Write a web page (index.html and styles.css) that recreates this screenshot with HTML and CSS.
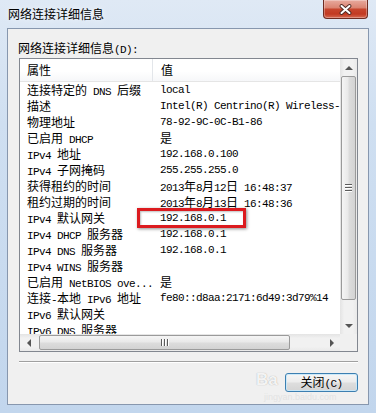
FILE: index.html
```html
<!DOCTYPE html>
<html lang="zh-CN">
<head>
    <meta charset="UTF-8">
    <meta name="viewport" content="width=device-width, initial-scale=1.0">
    <title>网络连接详细信息</title>
    <link rel="stylesheet" href="styles.css">
</head>
<body>
<div class="window">
    <div class="titlebar">
        <span class="title">网络连接详细信息</span>
        <div class="close">
            <svg width="13" height="11" viewBox="0 0 13 11">
                <path d="M2.5 2 L10.5 9 M10.5 2 L2.5 9" stroke="#4f2a24" stroke-width="3.8" stroke-linecap="round"/>
                <path d="M2.5 2 L10.5 9 M10.5 2 L2.5 9" stroke="#fff" stroke-width="2" stroke-linecap="round"/>
            </svg>
        </div>
    </div>

    <div class="client">
        <div class="label">网络连接详细信息<span class="en">(D):</span></div>

        <div class="listbox">
            <div class="viewport">
                <div class="header">
                    <div class="hcol name">属性</div>
                    <div class="hcol value">值</div>
                </div>
                <div class="rows">
                    <div class="row"><div class="cell name"><span class="zh">连接特定的</span> DNS <span class="zh">后缀</span></div><div class="cell value">local</div></div>
                    <div class="row"><div class="cell name"><span class="zh">描述</span></div><div class="cell value">Intel(R) Centrino(R) Wireless-N 1030</div></div>
                    <div class="row"><div class="cell name"><span class="zh">物理地址</span></div><div class="cell value">78-92-9C-0C-B1-86</div></div>
                    <div class="row"><div class="cell name"><span class="zh">已启用</span> DHCP</div><div class="cell value"><span class="zh">是</span></div></div>
                    <div class="row"><div class="cell name">IPv4 <span class="zh">地址</span></div><div class="cell value">192.168.0.100</div></div>
                    <div class="row"><div class="cell name">IPv4 <span class="zh">子网掩码</span></div><div class="cell value">255.255.255.0</div></div>
                    <div class="row"><div class="cell name"><span class="zh">获得租约的时间</span></div><div class="cell value">2013<span class="zh">年</span>8<span class="zh">月</span>12<span class="zh">日</span> 16:48:37</div></div>
                    <div class="row"><div class="cell name"><span class="zh">租约过期的时间</span></div><div class="cell value">2013<span class="zh">年</span>8<span class="zh">月</span>13<span class="zh">日</span> 16:48:36</div></div>
                    <div class="row marked"><div class="cell name">IPv4 <span class="zh">默认网关</span></div><div class="cell value">192.168.0.1</div><div class="mark"></div></div>
                    <div class="row"><div class="cell name">IPv4 DHCP <span class="zh">服务器</span></div><div class="cell value">192.168.0.1</div></div>
                    <div class="row"><div class="cell name">IPv4 DNS <span class="zh">服务器</span></div><div class="cell value">192.168.0.1</div></div>
                    <div class="row"><div class="cell name">IPv4 WINS <span class="zh">服务器</span></div><div class="cell value"></div></div>
                    <div class="row"><div class="cell name"><span class="zh">已启用</span> NetBIOS ove...</div><div class="cell value"><span class="zh">是</span></div></div>
                    <div class="row"><div class="cell name"><span class="zh">连接</span>-<span class="zh">本地</span> IPv6 <span class="zh">地址</span></div><div class="cell value">fe80::d8aa:2171:6d49:3d79%14</div></div>
                    <div class="row"><div class="cell name">IPv6 <span class="zh">默认网关</span></div><div class="cell value"></div></div>
                    <div class="row"><div class="cell name">IPv6 DNS <span class="zh">服务器</span></div><div class="cell value"></div></div>
                </div>
            </div>

            <div class="vscroll">
                <div class="arrow up"></div>
                <div class="track"><div class="thumb"><span class="grip"></span></div></div>
                <div class="arrow down"></div>
            </div>

            <div class="hscroll">
                <div class="arrow left"></div>
                <div class="track"><div class="thumb"><span class="grip"></span></div></div>
                <div class="arrow right"></div>
            </div>
            <div class="corner"></div>
        </div>

        <div class="separator"></div>

        <div class="actions">
            <button class="btn">关闭<span class="en">(C)</span></button>
        </div>
    </div>

    <!-- baidu watermark over the dialog -->
    <div class="watermark">
        <span class="wm-logo">Ba</span>
        <span class="wm-url">jingyan.baidu.com</span>
    </div>
</div>
</body>
</html>
```

FILE: styles.css
```css
* {
    box-sizing: border-box;
}

body {
    margin: 0;
    font-family: "Noto Sans CJK SC", sans-serif;
    font-size: 12px;
    color: #000;
}

.en {
    font-family: "Liberation Mono", monospace;
    font-size: 11px;
    letter-spacing: -0.6px;
}

.zh {
    font-family: "Noto Sans CJK SC", sans-serif;
    font-size: 12px;
    letter-spacing: 0;
}

/* Window frame (Aero glass) */
.window {
    position: relative;
    width: 376px;
    height: 413px;
    padding: 0 7px 8px 7px;
    display: flex;
    flex-direction: column;
    background: linear-gradient(#dfe9f5, #cfdff1 30%, #c2d6ed);
}

.titlebar {
    height: 28px;
    display: flex;
    align-items: flex-start;
}

.title {
    padding: 6px 0 0 1px;
    line-height: 16px;
    text-shadow: 0 0 6px rgba(255, 255, 255, 0.9);
}

.close {
    margin-left: auto;
    margin-right: 1px;
    width: 45px;
    height: 19px;
    display: flex;
    align-items: center;
    justify-content: center;
    border: 1px solid #6e2c22;
    border-top: none;
    border-radius: 0 0 4px 4px;
    background: linear-gradient(#e8aa9e, #db8573 42%, #c7452d 52%, #c23a22 78%, #d66a52);
    box-shadow: inset 0 0 0 1px rgba(255, 255, 255, 0.3);
}

/* Dialog client area */
.client {
    flex: 1;
    display: flex;
    flex-direction: column;
    border: 1px solid #8797ae;
    background: #f0f0f0;
    padding: 11px 10px 0 11px;
}

.label {
    margin-left: -1px;
    line-height: 16px;
    height: 16px;
}

.listbox {
    margin-top: 2px;
    height: 294px;
    border: 1px solid #828790;
    background: #fff;
    display: grid;
    grid-template-columns: 1fr 17px;
    grid-template-rows: 1fr 17px;
}

.viewport {
    overflow: hidden;
    min-width: 0;
}

.header {
    display: flex;
    height: 23px;
    line-height: 22px;
    border-bottom: 1px solid #e5e5e5;
    background: linear-gradient(#fff, #fff 55%, #f6f7f9);
}

.hcol.name {
    width: 133px;
    padding-left: 7px;
    border-right: 1px solid #e3e6ea;
}

.hcol.value {
    padding-left: 8px;
}

.row {
    display: flex;
    height: 16px;
    line-height: 16px;
    white-space: nowrap;
}

.cell {
    font-family: "Liberation Mono", monospace;
    font-size: 11px;
    letter-spacing: -0.6px;
}

.cell.name {
    width: 133px;
    flex-shrink: 0;
    padding-left: 7px;
    overflow: hidden;
}

.cell.value {
    padding-left: 7px;
}

/* red annotation box */
.row.marked {
    position: relative;
}

.mark {
    position: absolute;
    left: 117px;
    top: -2px;
    width: 109px;
    height: 20px;
    border: 3px solid #dc1b1f;
    box-shadow: 1px 1px 3px rgba(0, 0, 0, 0.45), inset 1px 1px 2px rgba(0, 0, 0, 0.25);
}

/* Scrollbars */
.vscroll,
.hscroll {
    display: flex;
    background: #eeeeee;
}

.vscroll {
    flex-direction: column;
    background: linear-gradient(to right, #e4e4e4, #f1f1f1 25%, #f1f1f1 75%, #e9e9e9);
}

.hscroll {
    background: linear-gradient(#e4e4e4, #f1f1f1 25%, #f1f1f1 75%, #e9e9e9);
}

.arrow {
    width: 17px;
    height: 17px;
    flex-shrink: 0;
    display: flex;
    align-items: center;
    justify-content: center;
}

.arrow::before {
    content: "";
    width: 0;
    height: 0;
}

.arrow.up::before {
    border-left: 4px solid transparent;
    border-right: 4px solid transparent;
    border-bottom: 4px solid #555;
}

.arrow.down::before {
    border-left: 4px solid transparent;
    border-right: 4px solid transparent;
    border-top: 4px solid #555;
}

.arrow.left::before {
    border-top: 4px solid transparent;
    border-bottom: 4px solid transparent;
    border-right: 4px solid #555;
}

.arrow.right::before {
    border-top: 4px solid transparent;
    border-bottom: 4px solid transparent;
    border-left: 4px solid #555;
}

.track {
    flex: 1;
    display: flex;
}

.thumb {
    display: flex;
    align-items: center;
    justify-content: center;
    border: 1px solid #9a9a9a;
    border-radius: 2px;
}

.vscroll .thumb {
    width: 15px;
    height: 224px;
    margin: 0 1px;
    background: linear-gradient(to right, #f5f5f5, #e9e9e9 45%, #dcdcdc 55%, #d3d3d3);
}

.hscroll .thumb {
    width: 251px;
    height: 15px;
    margin: 1px 0 0 2px;
    background: linear-gradient(#f5f5f5, #e9e9e9 45%, #dcdcdc 55%, #d3d3d3);
}

.vscroll .grip {
    width: 7px;
    height: 8px;
    background: repeating-linear-gradient(#5c5c5c 0 1px, #fff 1px 2px, transparent 2px 3px);
}

.hscroll .grip {
    width: 8px;
    height: 7px;
    background: repeating-linear-gradient(to right, #5c5c5c 0 1px, #fff 1px 2px, transparent 2px 3px);
}

.corner {
    background: #f0f0f0;
}

.separator {
    margin-top: 9px;
    height: 2px;
    border-top: 1px solid #a0a0a0;
    border-bottom: 1px solid #fff;
}

.actions {
    margin-top: 10px;
    display: flex;
    justify-content: flex-end;
}

.btn {
    width: 73px;
    height: 19px;
    padding: 0;
    font-family: "Noto Sans CJK SC", sans-serif;
    font-size: 12px;
    line-height: 16px;
    color: #000;
    border: 1px solid #3c7fb1;
    border-radius: 3px;
    background: linear-gradient(#f6f6f6, #ececec 48%, #dedede 52%, #d4d4d4);
    box-shadow: inset 0 0 0 1px rgba(200, 232, 250, 0.9);
}

/* Watermark */
.watermark {
    position: absolute;
    left: 256px;
    top: 370px;
    display: flex;
    flex-direction: column;
    pointer-events: none;
}

.wm-logo {
    font-family: "Liberation Sans", sans-serif;
    font-weight: bold;
    font-size: 17px;
    line-height: 20px;
    color: rgba(255, 255, 255, 0.9);
    text-shadow: 0 0 1px rgba(0, 0, 0, 0.35);
}

.wm-url {
    margin: 2px 0 0 8px;
    font-family: "Liberation Sans", sans-serif;
    font-size: 9px;
    line-height: 10px;
    color: rgba(215, 215, 215, 0.55);
}
```
